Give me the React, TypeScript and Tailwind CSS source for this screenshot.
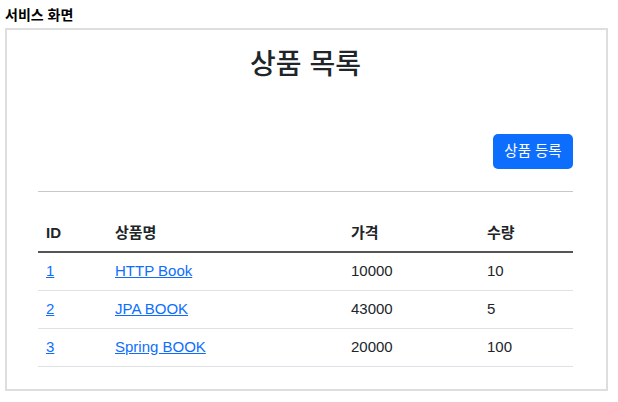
import React from "react";

const rows = [
  { id: 1, name: "HTTP Book", price: 10000, qty: 10 },
  { id: 2, name: "JPA BOOK", price: 43000, qty: 5 },
  { id: 3, name: "Spring BOOK", price: 20000, qty: 100 },
];

export default function App() {
  return (
    <div
      className="w-[618px] h-[402px] bg-white text-[#212529]"
      style={{ fontFamily: '"Liberation Sans", "Noto Sans CJK KR", sans-serif' }}
    >
      <div className="px-[5px] pt-[6px] h-[28px] text-[14px] font-bold leading-[18px] text-black">
        서비스 화면
      </div>
      <div className="ml-[5px] w-[603px] h-[363px] border-2 border-[#dedede] pl-[31px] pr-[33px]">
        <h2 className="mt-[18px] text-center text-[28px] leading-[34px] font-medium">상품 목록</h2>
        <div className="mt-[52px] flex justify-end">
          <button className="h-[35px] w-[80px] rounded-[5px] bg-[#0d6efd] text-white text-[14.5px] leading-[35px]">
            상품 등록
          </button>
        </div>
        <div className="mt-[22px] border-t border-[#c8c8c8]" />
        <table className="mt-[23px] w-full border-collapse text-[15px]">
          <colgroup>
            <col className="w-[69px]" />
            <col className="w-[236px]" />
            <col className="w-[136px]" />
            <col className="w-[94px]" />
          </colgroup>
          <thead>
            <tr className="border-b-2 border-[#555]">
              <th className="text-left font-bold px-[8px] h-[37px] align-middle">ID</th>
              <th className="text-left font-bold px-[8px] align-middle">상품명</th>
              <th className="text-left font-bold px-[8px] align-middle">가격</th>
              <th className="text-left font-bold px-[8px] align-middle">수량</th>
            </tr>
          </thead>
          <tbody>
            {rows.map((r) => (
              <tr key={r.id} className="border-b border-[#dee2e6]">
                <td className="px-[8px] h-[38px] align-middle">
                  <a href="#" className="text-[#0d6efd] underline">{r.id}</a>
                </td>
                <td className="px-[8px] align-middle">
                  <a href="#" className="text-[#0d6efd] underline">{r.name}</a>
                </td>
                <td className="px-[8px] align-middle">{r.price}</td>
                <td className="px-[8px] align-middle">{r.qty}</td>
              </tr>
            ))}
          </tbody>
        </table>
      </div>
    </div>
  );
}
